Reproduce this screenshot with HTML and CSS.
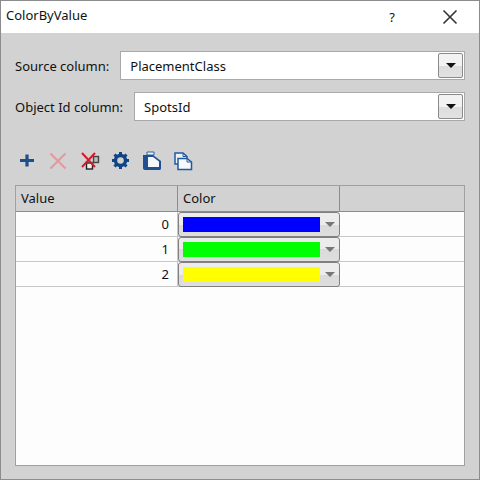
FILE: index.html
```html
<!DOCTYPE html>
<html lang="en">
<head>
  <meta charset="UTF-8">
  <link rel="stylesheet" href="styles.css">
  <title>ColorByValue</title>
</head>
<body>
  <div class="window">
    <div class="titlebar">
      <span class="title">ColorByValue</span>
      <span class="help">?</span>
      <svg class="close" width="16" height="16" viewBox="0 0 16 16"><path d="M1.500 1.500L14.500 14.500M14.500 1.500L1.500 14.500" stroke="#333" stroke-width="1.600" fill="none"/></svg>
    </div>
    <div class="content">
      <div class="form-row">
        <span class="form-label">Source column:</span>
        <div class="combo">
          <span class="combo-text">PlacementClass</span>
          <div class="combo-btn"><span class="arrow"></span></div>
        </div>
      </div>
      <div class="form-row">
        <span class="form-label">Object Id column:</span>
        <div class="combo">
          <span class="combo-text">SpotsId</span>
          <div class="combo-btn"><span class="arrow"></span></div>
        </div>
      </div>

      <div class="toolbar">
        <!-- add -->
        <svg class="tool" width="20" height="20" viewBox="0 0 20 20"><path d="M10 4.500V16.500M3 10.500H17" stroke="#1f4e86" stroke-width="3.200" fill="none"/></svg>
        <!-- remove (disabled) -->
        <svg class="tool" width="20" height="20" viewBox="0 0 20 20"><path d="M2.500 3.500L17.500 18.500M17.500 3.500L2.500 18.500" stroke="#e39aa0" stroke-width="2.200" fill="none"/></svg>
        <!-- remove all -->
        <svg class="tool" width="20" height="20" viewBox="0 0 20 20">
          <rect x="14.500" y="6.500" width="5" height="6" fill="#bbb" stroke="#444" stroke-width="1.400"/>
          <rect x="7.500" y="13" width="6" height="6" fill="#eee" stroke="#222" stroke-width="1.400"/>
          <path d="M3 3L16 17M16 3L3 17" stroke="#d8182c" stroke-width="2" fill="none"/>
        </svg>
        <!-- settings -->
        <svg class="tool" width="20" height="20" viewBox="0 0 20 20">
          <circle cx="10.500" cy="10.500" r="5" fill="none" stroke="#0f4488" stroke-width="3.400"/>
          <path d="M10.500 2V19M2 10.500H19M4.500 4.500L16.500 16.500M16.500 4.500L4.500 16.500" stroke="#0f4488" stroke-width="3" stroke-dasharray="3 11 3" fill="none"/>
        </svg>
        <!-- load -->
        <svg class="tool" width="20" height="20" viewBox="0 0 20 20">
          <path d="M6 2H13V5H6Z" fill="#f2f4f7" stroke="#2a5f9f" stroke-width="1"/>
          <path d="M2 5H12L20 11V18C20 19.500 19.500 20 18 20H4C2.800 20 2 19.200 2 18Z" fill="#1d4f92"/>
          <path d="M7 7H12L18 11.500V17H7Z" fill="#f4f6f9"/>
        </svg>
        <!-- save -->
        <svg class="tool" width="20" height="20" viewBox="0 0 20 20">
          <path d="M3 3H11L15 6.500V14H3Z" fill="#eef1f6" stroke="#1f5aa0" stroke-width="1.500"/>
          <path d="M11 3V6.500H15" fill="none" stroke="#1f5aa0" stroke-width="1"/>
          <path d="M6 8.500H15L19.500 12V19.500H6Z" fill="#f6f8fb" stroke="#1f5aa0" stroke-width="1.500"/>
          <path d="M15 8.500V12H19.500" fill="none" stroke="#1f5aa0" stroke-width="1"/>
        </svg>
      </div>

      <div class="table">
        <div class="table-head">
          <div class="th col-value">Value</div>
          <div class="th col-color">Color</div>
          <div class="th col-rest"></div>
        </div>
        <div class="table-row">
          <div class="td col-value">0</div>
          <div class="td col-color">
            <div class="color-combo"><span class="swatch swatch-blue"></span><span class="arrow-soft"></span></div>
          </div>
          <div class="td col-rest"></div>
        </div>
        <div class="table-row">
          <div class="td col-value">1</div>
          <div class="td col-color">
            <div class="color-combo"><span class="swatch swatch-green"></span><span class="arrow-soft"></span></div>
          </div>
          <div class="td col-rest"></div>
        </div>
        <div class="table-row">
          <div class="td col-value">2</div>
          <div class="td col-color">
            <div class="color-combo"><span class="swatch swatch-yellow"></span><span class="arrow-soft"></span></div>
          </div>
          <div class="td col-rest"></div>
        </div>
      </div>
    </div>
  </div>
</body>
</html>
```

FILE: styles.css
```css
html, body {
  margin: 0;
  height: 100%;
}

body {
  font-family: "Noto Sans", sans-serif;
  font-size: 13px;
  color: #111;
}

.window {
  box-sizing: border-box;
  width: 480px;
  height: 480px;
  display: flex;
  flex-direction: column;
  border: 1px solid #8c8c8c;
  background-color: #d2d2d2;
}

.titlebar {
  height: 32px;
  flex-shrink: 0;
  display: flex;
  align-items: center;
  background-color: #fff;
  padding: 0 21px 0 5px;
}

.title {
  flex: 1;
  margin-top: -4px;
}

.help {
  margin-right: 47px;
  margin-top: -1px;
}

.close {
  display: block;
}

.content {
  flex: 1;
  display: flex;
  flex-direction: column;
  padding: 18px 14px 13px 14px;
  min-height: 0;
}

.form-row {
  display: flex;
  align-items: center;
  height: 29px;
  margin-bottom: 12px;
}

.form-label {
  white-space: nowrap;
  margin-right: 11px;
}

.combo {
  box-sizing: border-box;
  flex: 1;
  height: 29px;
  display: flex;
  align-items: center;
  background-color: #fff;
  border: 1px solid #a9a9a9;
  padding-left: 9px;
}

.combo-text {
  flex: 1;
}

.combo-btn {
  box-sizing: border-box;
  width: 25px;
  height: 25px;
  margin-right: 1px;
  display: flex;
  align-items: center;
  justify-content: center;
  border: 1px solid #8a8a8a;
  border-radius: 2px;
  background: linear-gradient(#f2f2f2, #f2f2f2 50%, #dcdcdc 50%, #e2e2e2);
}

.arrow {
  width: 0;
  height: 0;
  border-left: 5px solid transparent;
  border-right: 5px solid transparent;
  border-top: 5px solid #111;
}

.toolbar {
  display: flex;
  align-items: center;
  gap: 11px;
  height: 20px;
  margin-top: 17px;
  margin-left: 2px;
  margin-bottom: 15px;
}

.tool {
  display: block;
  flex-shrink: 0;
  overflow: visible;
}

.table {
  flex: 1;
  box-sizing: border-box;
  border: 1px solid #a0a0a0;
  background-color: #fdfdfd;
}

.table-head {
  display: flex;
  height: 26px;
  background-color: #d2d2d2;
  border-bottom: 1px solid #8c8c8c;
  box-sizing: border-box;
}

.th {
  line-height: 24px;
  padding-left: 5px;
  box-sizing: border-box;
}

.table-row {
  display: flex;
  height: 25px;
  box-sizing: border-box;
  border-bottom: 1px solid #c8c8c8;
}

.col-value {
  width: 162px;
  box-sizing: border-box;
  border-right: 1px solid #8c8c8c;
}

.col-color {
  width: 162px;
  box-sizing: border-box;
  border-right: 1px solid #8c8c8c;
}

.col-rest {
  flex: 1;
}

.td.col-value {
  text-align: right;
  line-height: 24px;
  padding-right: 8px;
  border-right-color: #c8c8c8;
}

.td.col-color {
  border-right: none;
}

.color-combo {
  box-sizing: border-box;
  width: 162px;
  height: 25px;
  display: flex;
  align-items: center;
  padding-left: 4px;
  border: 1px solid #808080;
  border-radius: 3px;
  background: linear-gradient(#ececec, #ececec 50%, #dadada 50%, #dedede);
}

.swatch {
  width: 137px;
  height: 15px;
}

.swatch-blue { background-color: #0000ff; }
.swatch-green { background-color: #00ff00; }
.swatch-yellow { background-color: #ffff00; }

.arrow-soft {
  width: 0;
  height: 0;
  margin-left: 5px;
  border-left: 5px solid transparent;
  border-right: 5px solid transparent;
  border-top: 5px solid #777;
}
```
